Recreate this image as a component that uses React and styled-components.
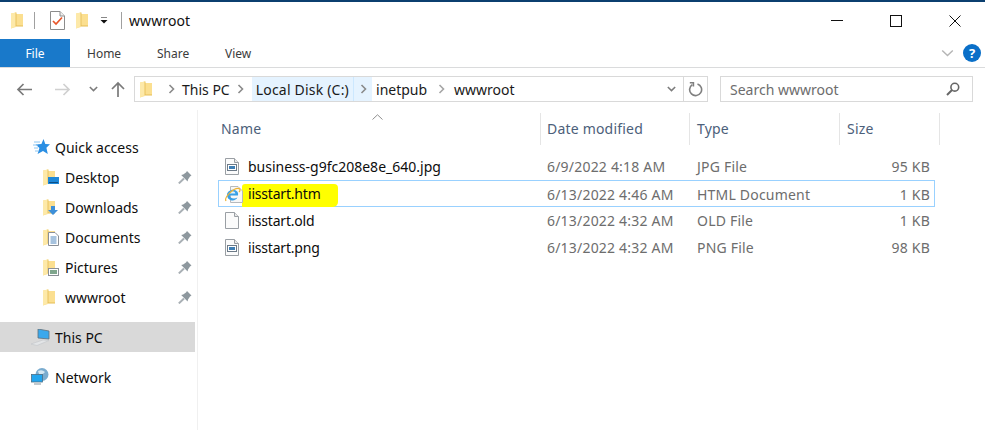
import React from 'react'
import styled, { createGlobalStyle } from 'styled-components'

const Global = createGlobalStyle`
  html, body { margin: 0; padding: 0; background: #fff; }
  body { font-family: "Noto Sans", "Open Sans", sans-serif; overflow: hidden; }
`

const Win = styled.div`
  width: 985px;
  height: 430px;
  display: flex;
  flex-direction: column;
  border-top: 2px solid #0b3f6f;
  box-sizing: border-box;
  overflow: hidden;
`

// title bar
const TitleBar = styled.div`
  height: 37px;
  display: flex;
  align-items: center;
  padding-left: 11px;
  flex: none;
`
const VSep = styled.span`
  width: 1px;
  height: 17px;
  background: #a0a0a0;
  margin: 0 ${p => p.$right}px 0 ${p => p.$left}px;
`
const QuickBtn = styled.span`
  display: flex;
  margin: 0 ${p => p.$right || 0}px 0 ${p => p.$left || 0}px;
`
const WinTitle = styled.span`
  font-size: 14px;
  color: #111;
  letter-spacing: 0.1px;
`
const WinButtons = styled.div`
  margin-left: auto;
  display: flex;
  align-items: center;
  padding-right: 1px;
`
const WinBtn = styled.span`
  width: 59px;
  height: 30px;
  display: flex;
  align-items: center;
  justify-content: center;
`

// tabs
const TabBar = styled.div`
  height: 28px;
  display: flex;
  align-items: stretch;
  flex: none;
  border-bottom: 1px solid #dadbdc;
`
const FileTab = styled.div`
  width: 70px;
  background: #1979ca;
  color: #fff;
  font-size: 12px;
  display: flex;
  align-items: center;
  justify-content: center;
`
const Tab = styled.div`
  font-size: 12px;
  color: #3b3b3b;
  display: flex;
  align-items: center;
  box-sizing: border-box;
  width: ${p => p.$w}px;
  padding-left: 17px;
`
const TabEnd = styled.div`
  margin-left: auto;
  display: flex;
  align-items: center;
  gap: 9px;
  padding: 0 4px 0 0;
`
const Help = styled.span`
  width: 18px;
  height: 18px;
  border-radius: 50%;
  background: #0a6fc8;
  color: #fff;
  font-size: 13px;
  font-weight: 700;
  display: flex;
  align-items: center;
  justify-content: center;
`

// address row
const AddrRow = styled.div`
  height: 26px;
  margin-top: 8px;
  display: flex;
  align-items: center;
  flex: none;
`
const NavBtns = styled.div`
  width: 134px;
  height: 26px;
  display: flex;
  align-items: center;
  flex: none;
`
const NavIcon = styled.span`
  display: flex;
  margin-left: ${p => p.$left}px;
`
const AddrBox = styled.div`
  width: 574px;
  height: 26px;
  box-sizing: border-box;
  border: 1px solid #d9d9d9;
  display: flex;
  align-items: stretch;
  flex: none;
`
const Crumb = styled.span`
  font-size: 14px;
  color: #1a1a1a;
  display: flex;
  align-items: center;
  padding: 0 ${p => p.$pad ?? 0}px;
  background: ${p => (p.$hot ? '#e5f3ff' : 'transparent')};
  letter-spacing: ${p => (p.$hot ? '0.2px' : '0')};
`
const CrumbArrow = styled.span`
  display: flex;
  align-items: center;
  justify-content: center;
  width: ${p => p.$w || 18}px;
  background: ${p => (p.$hot ? '#e5f3ff' : 'transparent')};
  border-left: ${p => (p.$hot ? '1px solid #cce8ff' : 'none')};
  box-sizing: border-box;
`
const AddrEnd = styled.div`
  margin-left: auto;
  display: flex;
  align-items: stretch;
`
const AddrBtn = styled.span`
  width: 23px;
  display: flex;
  align-items: center;
  justify-content: center;
  border-left: ${p => (p.$line ? '1px solid #d9d9d9' : 'none')};
`
const SearchBox = styled.div`
  width: 253px;
  height: 26px;
  box-sizing: border-box;
  margin-left: 12px;
  border: 1px solid #d9d9d9;
  display: flex;
  align-items: center;
  justify-content: space-between;
  padding: 0 12px 0 9px;
  font-size: 14px;
  color: #6d6d6d;
`

// main
const Body = styled.div`
  flex: 1;
  display: flex;
  min-height: 0;
  margin-top: 8px;
`
const Sidebar = styled.nav`
  width: 198px;
  box-sizing: border-box;
  border-right: 1px solid #f0f0f0;
  padding: 22px 2px 0 0;
  flex: none;
`
const NavRow = styled.div`
  height: 30px;
  display: flex;
  align-items: center;
  font-size: 14px;
  color: #0d0d0d;
  padding-left: ${p => p.$indent}px;
  margin-top: ${p => p.$gap || 0}px;
  background: ${p => (p.$active ? '#d9d9d9' : 'transparent')};
`
const NavGlyph = styled.span`
  width: ${p => p.$w}px;
  display: flex;
  flex: none;
`
const Pin = styled.span`
  margin-left: auto;
  margin-right: 3px;
  display: flex;
`

const Content = styled.main`
  flex: 1;
  padding: 3px 0 0 20px;
  min-width: 0;
`
const Header = styled.div`
  position: relative;
  display: flex;
  height: 32px;
  margin-bottom: 8px;
`
const SortCaret = styled.span`
  position: absolute;
  left: 154px;
  top: 1px;
  display: flex;
`
const HeadCell = styled.div`
  width: ${p => p.$w}px;
  box-sizing: border-box;
  padding: 0 0 2px ${p => p.$pad}px;
  border-right: 1px solid #e5e5e5;
  font-size: 14px;
  letter-spacing: 0.2px;
  color: #4c607a;
  display: flex;
  align-items: center;
`
const FileRow = styled.div`
  width: 717px;
  height: 27px;
  box-sizing: border-box;
  border: 1px solid ${p => (p.$selected ? '#99d1ff' : 'transparent')};
  display: grid;
  grid-template-columns: 321px 149px 150px 95px;
  align-items: center;
  font-size: 14px;
`
const NameCell = styled.div`
  display: flex;
  align-items: center;
  color: #0d0d0d;
  padding-left: 6px;
  letter-spacing: ${p => (p.$tight ? '-0.2px' : '0')};
`
const FileIcon = styled.span`
  width: 23px;
  display: flex;
  flex: none;
  position: relative;
  z-index: 1;
`
const Marked = styled.span`
  background: #ffff00;
  height: 23px;
  line-height: 20px;
  margin: 3px 0 0 -6px;
  padding: 0 17px 0 6px;
  border-radius: 3px 4px 5px 1px;
`
const DetailCell = styled.div`
  color: #6d6d6d;
  letter-spacing: 0.2px;
  padding-left: ${p => p.$pad || 0}px;
  padding-right: ${p => p.$right || 0}px;
  text-align: ${p => p.$align || 'left'};
`

// icons
const Folder = ({ children }) => (
  <svg width="16" height="17" viewBox="0 0 16 17">
    <path d="M0 1.5 L5 .5 L5 2 L12 2 L12 14 L5 14 L5 15 L0 16.5 Z" fill="#fbdf90" />
    <path d="M0 1.5 L5 .5 L5 14 L0 16.5 Z" fill="#fde9a9" />
    <path d="M5 .5 V14" stroke="#e8c25f" strokeWidth="1" />
    <path d="M5 14 H12" stroke="#e5bd55" strokeWidth="1" />
    {children}
  </svg>
)
const DocCheck = () => (
  <svg width="15" height="19" viewBox="0 0 15 19">
    <path d="M.5.5 H10 L14.5 5 V18.5 H.5 Z" fill="#fff" stroke="#8c8c8c" />
    <path d="M10 .5 V5 H14.5" fill="#eee" stroke="#8c8c8c" />
    <path d="M3 10 L6 13 L12 6.5" fill="none" stroke="#e8562a" strokeWidth="1.7" />
  </svg>
)
const Dropdown = () => (
  <svg width="8" height="7" viewBox="0 0 8 7">
    <path d="M1 0 H7" stroke="#111" />
    <path d="M.5 3 H7.5 L4 6.5 Z" fill="#111" />
  </svg>
)
const Chevron = ({ color = '#8a8a8a' }) => (
  <svg width="7" height="10" viewBox="0 0 7 10">
    <path d="M1.5 1 L5.5 5 L1.5 9" fill="none" stroke={color} strokeWidth="1.6" />
  </svg>
)
const ChevDown = ({ w = 9, color = '#7c7c7c', sw = 1.6 }) => (
  <svg width={w} height={w * 0.66} viewBox="0 0 9 6">
    <path d="M.8 1 L4.5 4.6 L8.2 1" fill="none" stroke={color} strokeWidth={sw} />
  </svg>
)
const ArrowLeft = ({ color }) => (
  <svg width="16" height="13" viewBox="0 0 16 13">
    <path d="M16 6.5 H2 M7.5 1 L2 6.5 L7.5 12" fill="none" stroke={color} strokeWidth="1.7" />
  </svg>
)
const ArrowRight = ({ color }) => (
  <svg width="16" height="13" viewBox="0 0 16 13">
    <path d="M0 6.5 H14 M8.5 1 L14 6.5 L8.5 12" fill="none" stroke={color} strokeWidth="1.7" />
  </svg>
)
const ArrowUp = () => (
  <svg width="14" height="16" viewBox="0 0 14 16">
    <path d="M7 16 V2 M1 8 L7 2 L13 8" fill="none" stroke="#7a7a7a" strokeWidth="1.7" />
  </svg>
)
const Refresh = () => (
  <svg width="15" height="15" viewBox="0 0 15 15">
    <path d="M4.3 2.6 A6 6 0 1 0 9.5 1.9" fill="none" stroke="#7f7f7f" strokeWidth="1.6" />
    <path d="M1.8 .8 H5.4 V4.6" fill="none" stroke="#7f7f7f" strokeWidth="1.6" />
  </svg>
)
const SearchIcon = () => (
  <svg width="14" height="14" viewBox="0 0 14 14">
    <circle cx="8.8" cy="5.2" r="3.9" fill="none" stroke="#666" strokeWidth="1.6" />
    <path d="M6 8 L1 13" stroke="#666" strokeWidth="2" />
  </svg>
)
const Star = () => (
  <svg width="17" height="16" viewBox="0 0 17 16">
    <path d="M10.5 0 L12.3 5 L17 5.2 L13.4 8.8 L14.8 15 L10 12 L4.6 15 L6.4 9 L2.6 5.4 L8.4 5 Z" fill="#2b8fe3" />
    <path d="M1 3 H7 M0 6 H5 M1 9 H5 M2 12 H5" stroke="#8cc6f2" strokeWidth="1" />
  </svg>
)
const PinIcon = () => (
  <svg width="14" height="13" viewBox="0 0 14 13">
    <path d="M9 0 L13.5 4.5 L12 5.5 L10 8.5 L9.6 10.4 L3.2 4 L5.2 3.6 L8 1.6 Z" fill="#8e989e" />
    <path d="M6 7.5 L.8 12.4" stroke="#a9b0b5" strokeWidth="2" />
  </svg>
)
const DesktopBadge = () => (
  <>
    <rect x="5" y="8" width="11" height="7" fill="#1e88d9" />
    <path d="M6 13.5 H15" stroke="#0d4f87" />
  </>
)
const DownloadBadge = () => <path d="M8 7 H12 V11 H15 L10 16 L5 11 H8 Z" fill="#3d8fd9" />
const DocumentBadge = () => (
  <>
    <path d="M5.5 3.5 H12 L15.5 7 V16.5 H5.5 Z" fill="#fff" stroke="#8a8f96" />
    <path d="M7.5 8 H13.5 M7.5 10 H13.5 M7.5 12 H13.5 M7.5 14 H13.5" stroke="#4f86bd" />
  </>
)
const PictureBadge = () => (
  <>
    <rect x="5.5" y="9.5" width="10" height="7" fill="#fff" stroke="#8a8f96" />
    <rect x="7" y="11" width="7" height="4" fill="#7fa68d" />
  </>
)
const PcIcon = () => (
  <svg width="20" height="17" viewBox="0 0 20 17">
    <path d="M7 0 L18 2 V10 L7 9 Z" fill="#3aa8ec" stroke="#5f6f7a" strokeWidth=".8" />
    <path d="M0 15 L12 11 L18 11.5 L6 16.5 Z" fill="#e3e5e7" stroke="#c3c6c9" strokeWidth=".6" />
  </svg>
)
const NetIcon = () => (
  <svg width="19" height="18" viewBox="0 0 19 18">
    <circle cx="11" cy="6.5" r="6.5" fill="#7aaccf" />
    <path d="M7 3 Q11 1 14 4 Q12 7 8 6 Z" fill="#d3e6f2" />
    <rect x="0.5" y="6.5" width="11" height="7.5" fill="#22a5ee" stroke="#4d6f86" strokeWidth=".8" />
    <rect x="3" y="14.5" width="7" height="2.5" fill="#c2c9ce" />
  </svg>
)
const ImageFile = () => (
  <svg width="14" height="17" viewBox="0 0 14 17">
    <path d="M.5.5 H9.5 L13.5 4.5 V16.5 H.5 Z" fill="#fbfbfb" stroke="#9a9fa4" />
    <path d="M9.5.5 V4.5 H13.5" fill="#e9e9e9" stroke="#9a9fa4" />
    <rect x="2.5" y="6.5" width="9" height="6" fill="#fff" stroke="#6d7a87" />
    <rect x="4" y="8" width="6" height="3" fill="#3f7fb5" />
  </svg>
)
const BlankFile = () => (
  <svg width="14" height="17" viewBox="0 0 14 17">
    <path d="M.5.5 H9.5 L13.5 4.5 V16.5 H.5 Z" fill="#fbfbfb" stroke="#9a9fa4" />
    <path d="M9.5.5 V4.5 H13.5" fill="#e9e9e9" stroke="#9a9fa4" />
  </svg>
)
const IeFile = () => (
  <svg width="18" height="17" viewBox="0 0 18 17">
    <path d="M5.5.5 H13 L17.5 5 V16.5 H5.5 Z" fill="#f7f7f7" stroke="#b5b9bd" />
    <path d="M13 9.5 H4.8 C5 12.5 9 13.5 12.4 11.6 C10.8 15.6 3 15.8 2 9.4 C1.6 4 9.5 1.6 12.4 5.8 C13.2 7 13.2 8.2 13 9.5 Z" fill="#39a0e6" />
    <path d="M4.8 7.6 C5.4 4.6 9.8 4.6 10.4 7.6 Z" fill="#e4f3fc" />
    <path d="M1 15 C-1.2 11.5 9 1 14.2 2.6 C15.6 3.4 14.8 5.4 14 6.2" fill="none" stroke="#eeb333" strokeWidth="1.2" />
  </svg>
)

const navItems = [
  { label: 'Desktop', badge: <DesktopBadge /> },
  { label: 'Downloads', badge: <DownloadBadge /> },
  { label: 'Documents', badge: <DocumentBadge /> },
  { label: 'Pictures', badge: <PictureBadge /> },
  { label: 'wwwroot', badge: null },
]

const files = [
  { name: 'business-g9fc208e8e_640.jpg', date: '6/9/2022 4:18 AM', type: 'JPG File', size: '95 KB', icon: <ImageFile /> },
  { name: 'iisstart.htm', date: '6/13/2022 4:46 AM', type: 'HTML Document', size: '1 KB', icon: <IeFile />, selected: true, tight: true },
  { name: 'iisstart.old', date: '6/13/2022 4:32 AM', type: 'OLD File', size: '1 KB', icon: <BlankFile />, tight: true },
  { name: 'iisstart.png', date: '6/13/2022 4:32 AM', type: 'PNG File', size: '98 KB', icon: <ImageFile />, tight: true },
]

export default function App() {
  return (
    <Win>
      <Global />
      <TitleBar>
        <Folder />
        <VSep $left={7} $right={15} />
        <QuickBtn $right={11}><DocCheck /></QuickBtn>
        <Folder />
        <QuickBtn $left={8}><Dropdown /></QuickBtn>
        <VSep $left={13} $right={7} />
        <WinTitle>wwwroot</WinTitle>
        <WinButtons>
          <WinBtn>
            <svg width="12" height="1"><rect width="12" height="1" fill="#111" /></svg>
          </WinBtn>
          <WinBtn>
            <svg width="12" height="12"><rect x=".5" y=".5" width="11" height="11" fill="none" stroke="#111" /></svg>
          </WinBtn>
          <WinBtn>
            <svg width="12" height="12"><path d="M.5 .5 L11.5 11.5 M11.5 .5 L.5 11.5" stroke="#111" /></svg>
          </WinBtn>
        </WinButtons>
      </TitleBar>

      <TabBar>
        <FileTab>File</FileTab>
        <Tab $w={70}>Home</Tab>
        <Tab $w={68}>Share</Tab>
        <Tab $w={60}>View</Tab>
        <TabEnd>
          <ChevDown w={13} color="#b5b5b5" sw={1} />
          <Help>?</Help>
        </TabEnd>
      </TabBar>

      <AddrRow>
        <NavBtns>
          <NavIcon $left={16}><ArrowLeft color="#7a7a7a" /></NavIcon>
          <NavIcon $left={23}><ArrowRight color="#d0d0d0" /></NavIcon>
          <NavIcon $left={18}><ChevDown /></NavIcon>
          <NavIcon $left={13}><ArrowUp /></NavIcon>
        </NavBtns>
        <AddrBox>
          <Crumb $pad={5}><Folder /></Crumb>
          <CrumbArrow $w={21}><Chevron /></CrumbArrow>
          <Crumb>This PC</Crumb>
          <CrumbArrow $w={22}><Chevron /></CrumbArrow>
          <Crumb $hot $pad={4}>Local Disk (C:)</Crumb>
          <CrumbArrow $hot $w={19}><Chevron /></CrumbArrow>
          <Crumb $pad={4}>inetpub</Crumb>
          <CrumbArrow $w={21}><Chevron color="#a5a5a5" /></CrumbArrow>
          <Crumb $pad={2}>wwwroot</Crumb>
          <AddrEnd>
            <AddrBtn><ChevDown /></AddrBtn>
            <AddrBtn $line><Refresh /></AddrBtn>
          </AddrEnd>
        </AddrBox>
        <SearchBox>
          Search wwwroot
          <SearchIcon />
        </SearchBox>
      </AddrRow>

      <Body>
        <Sidebar>
          <NavRow $indent={33}>
            <NavGlyph $w={22}><Star /></NavGlyph>
            Quick access
          </NavRow>
          {navItems.map(item => (
            <NavRow key={item.label} $indent={43}>
              <NavGlyph $w={22}><Folder>{item.badge}</Folder></NavGlyph>
              {item.label}
              <Pin><PinIcon /></Pin>
            </NavRow>
          ))}
          <NavRow $indent={31} $gap={10} $active>
            <NavGlyph $w={24}><PcIcon /></NavGlyph>
            This PC
          </NavRow>
          <NavRow $indent={31} $gap={10}>
            <NavGlyph $w={24}><NetIcon /></NavGlyph>
            Network
          </NavRow>
        </Sidebar>
        <Content>
          <Header>
            <SortCaret>
              <svg width="11" height="6" viewBox="0 0 11 6">
                <path d="M.5 5.5 L5.5 .8 L10.5 5.5" fill="none" stroke="#8f8f8f" />
              </svg>
            </SortCaret>
            <HeadCell $w={323} $pad={3}>Name</HeadCell>
            <HeadCell $w={149} $pad={6}>Date modified</HeadCell>
            <HeadCell $w={150} $pad={7}>Type</HeadCell>
            <HeadCell $w={100} $pad={7}>Size</HeadCell>
          </Header>
          {files.map(f => (
            <FileRow key={f.name} $selected={f.selected}>
              <NameCell $tight={f.tight}>
                <FileIcon>{f.icon}</FileIcon>
                {f.selected ? <Marked>{f.name}</Marked> : f.name}
              </NameCell>
              <DetailCell $pad={7}>{f.date}</DetailCell>
              <DetailCell $pad={8}>{f.type}</DetailCell>
              <DetailCell $align="right" $right={4}>{f.size}</DetailCell>
            </FileRow>
          ))}
        </Content>
      </Body>
    </Win>
  )
}
